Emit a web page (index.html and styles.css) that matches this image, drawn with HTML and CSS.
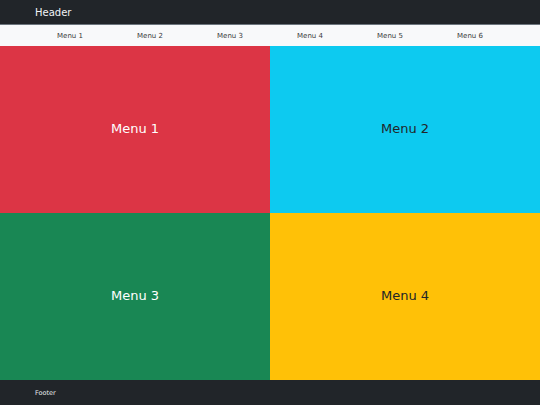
FILE: index.html
```html
<!DOCTYPE html>
<html>
<head>
<meta charset="utf-8">
<link rel="stylesheet" href="styles.css">
</head>
<body>
<div class="page">
  <header class="header"><span class="brand">Header</span></header>
  <nav class="nav">
    <a class="nav-item">Menu 1</a>
    <a class="nav-item">Menu 2</a>
    <a class="nav-item">Menu 3</a>
    <a class="nav-item">Menu 4</a>
    <a class="nav-item">Menu 5</a>
    <a class="nav-item">Menu 6</a>
  </nav>
  <main class="grid">
    <section class="tile tile-red">Menu 1</section>
    <section class="tile tile-cyan">Menu 2</section>
    <section class="tile tile-green">Menu 3</section>
    <section class="tile tile-yellow">Menu 4</section>
  </main>
  <footer class="footer">Footer</footer>
</div>
</body>
</html>
```

FILE: styles.css
```css
html, body {
  margin: 0;
  padding: 0;
  height: 100%;
}
body {
  font-family: "DejaVu Sans", sans-serif;
  background: #212529;
}
.page {
  height: 405px;
  display: flex;
  flex-direction: column;
}
.header {
  height: 25px;
  box-sizing: border-box;
  border-bottom: 1px solid #6c757d;
  background: #212529;
  display: flex;
  align-items: center;
  padding-left: 35px;
  color: #f1f3f5;
  font-size: 10px;
}
.nav {
  height: 21px;
  background: #f8f9fa;
  display: flex;
  align-items: center;
  padding-left: 30px;
}
.nav-item {
  width: 80px;
  text-align: center;
  font-size: 7px;
  color: #3a3a3a;
}
.grid {
  flex: 1;
  display: grid;
  grid-template-columns: 270px 1fr;
  grid-template-rows: 1fr 1fr;
}
.tile {
  display: flex;
  align-items: center;
  justify-content: center;
  font-size: 13px;
  padding-bottom: 3px;
}
.tile-red { background: #dc3545; color: #fff; }
.tile-cyan { background: #0dcaf0; color: #212529; }
.tile-green { background: #198754; color: #fff; }
.tile-yellow { background: #ffc107; color: #212529; }
.footer {
  height: 25px;
  background: #212529;
  color: #e9ecef;
  font-size: 6.5px;
  display: flex;
  align-items: center;
  padding-left: 35px;
}
```
